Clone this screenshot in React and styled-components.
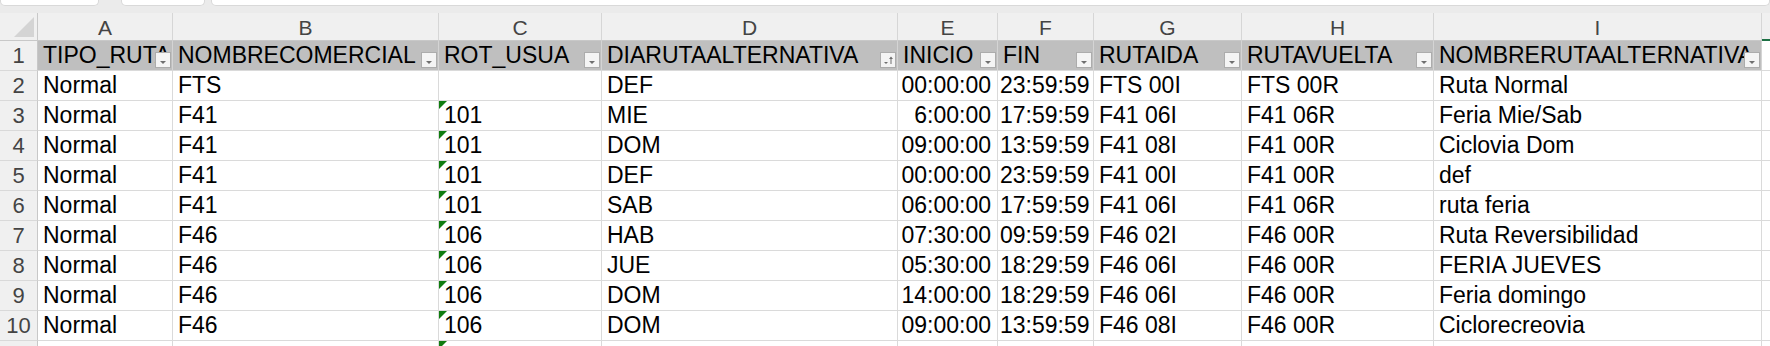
import React from "react";
import styled, { createGlobalStyle } from "styled-components";

const GlobalStyle = createGlobalStyle`
  html, body { margin: 0; padding: 0; background: #ffffff; }
  body { font-family: "Liberation Sans", Arial, sans-serif; }
  * { box-sizing: border-box; }
`;

const COLS = [38, 135, 266, 163, 296, 100, 96, 148, 192, 328];

const Sheet = styled.div`
  width: 1770px;
  height: 346px;
  overflow: hidden;
  background: #ffffff;
`;

const TabStrip = styled.div`
  display: flex;
  align-items: flex-start;
  height: 13px;
  background: #ebebeb;
`;

const Tab = styled.div`
  height: 6px;
  width: ${(p) => (p.$width ? `${p.$width}px` : "auto")};
  flex: ${(p) => (p.$width ? "none" : "1")};
  margin-left: ${(p) => p.$gap || 0}px;
  background: #ffffff;
  border: 1px solid #d9d9d9;
  border-top: none;
  border-radius: 0 0 5px 5px;
`;

const Grid = styled.div`
  display: grid;
  grid-template-columns: ${COLS.map((c) => `${c}px`).join(" ")} 1fr;
  grid-template-rows: 28px;
  grid-auto-rows: 30px;
`;

const Corner = styled.div`
  background: #f0f0f0;
  border-right: 1px solid #c8c8c8;
  border-bottom: 1px solid #c8c8c8;
  display: flex;
  align-items: flex-end;
  justify-content: flex-end;
  padding: 0 3px 3px 0;
`;

const ColHead = styled.div`
  background: #f0f0f0;
  border-right: 1px solid #d6d6d6;
  border-bottom: ${(p) => (p.$selected ? "2px solid #1d7044" : "1px solid #c8c8c8")};
  display: flex;
  align-items: flex-end;
  justify-content: center;
  font-size: 21px;
  line-height: 1.1;
  color: #444444;
  padding-bottom: ${(p) => (p.$selected ? "0" : "1px")};
`;

const RowHead = styled.div`
  background: #f0f0f0;
  border-right: 1px solid #c8c8c8;
  border-bottom: 1px solid #d9d9d9;
  font-size: 22px;
  line-height: 29px;
  color: #444444;
  text-align: center;
`;

const Cell = styled.div`
  position: relative;
  background: ${(p) => (p.$head ? "#bfbfbf" : "#ffffff")};
  border-right: 1px solid ${(p) => (p.$head ? "#d4d4d4" : "#dadada")};
  border-bottom: 1px solid #dadada;
  padding: ${(p) => (p.$align === "right" ? "0 6px 0 2px" : "0 4px 0 5px")};
  font-size: 23px;
  line-height: 29px;
  color: #000000;
  text-align: ${(p) => p.$align || "left"};
  white-space: nowrap;
  overflow: hidden;
`;

const Flag = styled.span`
  position: absolute;
  top: 0;
  left: 0;
  width: 0;
  height: 0;
  border-top: 8px solid #107c10;
  border-right: 8px solid transparent;
`;

const FilterButton = styled.span`
  position: absolute;
  right: 1px;
  bottom: 2px;
  width: 16px;
  height: 16px;
  background: #f4f4f4;
  border: 1px solid #acacac;
  display: flex;
  align-items: center;
  justify-content: center;
`;

function DropIcon() {
  return (
    <svg width="14" height="14" viewBox="0 0 14 14">
      <polygon points="4,8 10,8 7,11" fill="#6f6f6f" />
    </svg>
  );
}

function SortIcon() {
  return (
    <svg width="14" height="14" viewBox="0 0 14 14">
      <polygon points="3,9 7,9 5,11" fill="#6f6f6f" />
      <line x1="10" y1="4.5" x2="10" y2="11" stroke="#6f6f6f" strokeWidth="1" />
      <polygon points="8,6 12,6 10,3.5" fill="#6f6f6f" />
    </svg>
  );
}

function SelectAll() {
  return (
    <svg width="20" height="20" viewBox="0 0 20 20">
      <polygon points="20,0 20,20 0,20" fill="#d4d4d4" />
    </svg>
  );
}

const LETTERS = ["A", "B", "C", "D", "E", "F", "G", "H", "I", ""];

const HEADERS = [
  { t: "TIPO_RUTA", icon: "drop" },
  { t: "NOMBRECOMERCIAL", icon: "drop" },
  { t: "ROT_USUA", icon: "drop" },
  { t: "DIARUTAALTERNATIVA", icon: "sort" },
  { t: "INICIO", icon: "drop" },
  { t: "FIN", icon: "drop" },
  { t: "RUTAIDA", icon: "drop" },
  { t: "RUTAVUELTA", icon: "drop" },
  { t: "NOMBRERUTAALTERNATIVA", icon: "drop" },
];

const ALIGN = ["left", "left", "left", "left", "right", "right", "left", "left", "left"];

const ROWS = [
  ["Normal", "FTS", "", "DEF", "00:00:00", "23:59:59", "FTS 00I", "FTS 00R", "Ruta Normal"],
  ["Normal", "F41", "101", "MIE", "6:00:00", "17:59:59", "F41 06I", "F41 06R", "Feria Mie/Sab"],
  ["Normal", "F41", "101", "DOM", "09:00:00", "13:59:59", "F41 08I", "F41 00R", "Ciclovia Dom"],
  ["Normal", "F41", "101", "DEF", "00:00:00", "23:59:59", "F41 00I", "F41 00R", "def"],
  ["Normal", "F41", "101", "SAB", "06:00:00", "17:59:59", "F41 06I", "F41 06R", "ruta feria"],
  ["Normal", "F46", "106", "HAB", "07:30:00", "09:59:59", "F46 02I", "F46 00R", "Ruta Reversibilidad"],
  ["Normal", "F46", "106", "JUE", "05:30:00", "18:29:59", "F46 06I", "F46 00R", "FERIA JUEVES"],
  ["Normal", "F46", "106", "DOM", "14:00:00", "18:29:59", "F46 06I", "F46 00R", "Feria domingo"],
  ["Normal", "F46", "106", "DOM", "09:00:00", "13:59:59", "F46 08I", "F46 00R", "Ciclorecreovia"],
];

export default function App() {
  return (
    <>
      <GlobalStyle />
      <Sheet>
        <TabStrip>
          <Tab $width={99} />
          <Tab $width={84} $gap={22} />
          <Tab $gap={6} />
        </TabStrip>
        <Grid>
          <Corner>
            <SelectAll />
          </Corner>
          {LETTERS.map((l, i) => (
            <ColHead key={`c${i}`} $selected={l === ""}>
              {l}
            </ColHead>
          ))}

          <RowHead>1</RowHead>
          {HEADERS.map((h, i) => (
            <Cell key={`h${i}`} $head>
              {h.t}
              <FilterButton>{h.icon === "sort" ? <SortIcon /> : <DropIcon />}</FilterButton>
            </Cell>
          ))}
          <Cell />

          {ROWS.map((row, r) => (
            <React.Fragment key={`r${r}`}>
              <RowHead>{r + 2}</RowHead>
              {row.map((v, c) => (
                <Cell key={`r${r}c${c}`} $align={ALIGN[c]}>
                  {c === 2 && r > 0 && <Flag />}
                  {v}
                </Cell>
              ))}
              <Cell />
            </React.Fragment>
          ))}

          <RowHead />
          {ALIGN.map((a, c) => (
            <Cell key={`last${c}`} $align={a}>
              {c === 2 && <Flag />}
            </Cell>
          ))}
          <Cell />
        </Grid>
      </Sheet>
    </>
  );
}
